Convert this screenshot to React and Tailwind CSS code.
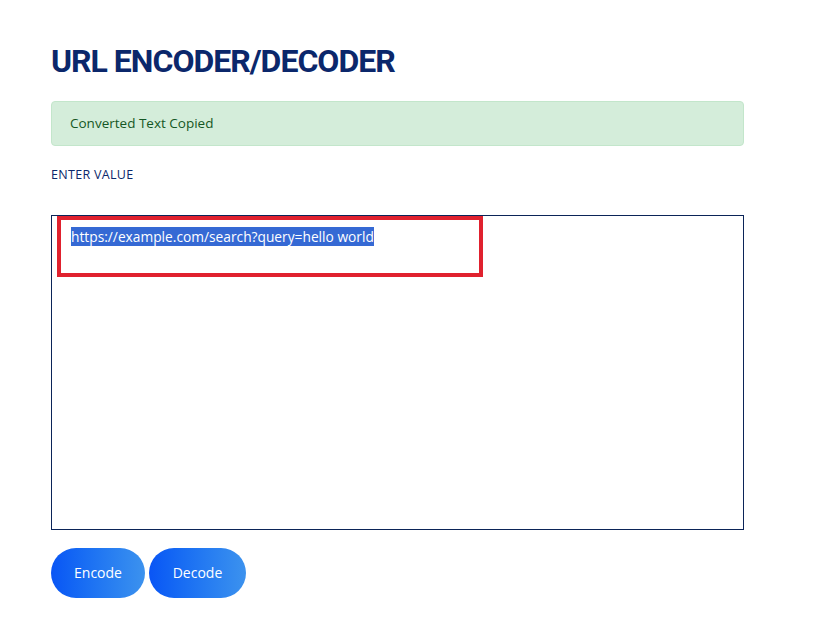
import React from 'react';

const poppins = { fontFamily: '"Open Sans", "Noto Sans", sans-serif' };

const App = () => {
  return (
    <div className="min-h-screen bg-white" style={poppins}>
      <main className="pl-[51px] pr-[78px] pt-[44px]">
        <h1
          className="text-[32px] leading-[34px] font-bold text-[#0b276b] tracking-[-1px]"
          style={{ fontFamily: 'Roboto, "Liberation Sans", sans-serif' }}
        >
          URL ENCODER/DECODER
        </h1>

        {/* Alert */}
        <div className="mt-[23px] h-[45px] flex items-center px-[18px] bg-[#d4edda] border border-[#c3e6cb] rounded-[4px] text-[13.5px] text-[#155724]">
          Converted Text Copied
        </div>

        <label className="block mt-[20px] text-[12.5px] font-medium text-[#0b276b] tracking-[0.3px]">
          ENTER VALUE
        </label>

        {/* Textarea */}
        <div className="relative mt-[30px] h-[315px] border border-[#0b2458] bg-white">
          <div className="pt-[12px] pl-[19px] text-[13.75px] leading-[18px]">
            <span className="bg-[#3569d4] text-white">https://example.com/search?query=hello world</span>
          </div>
          <div className="absolute left-[5px] top-0 w-[426px] h-[61px] border-[4px] border-[#e0212e]" />
        </div>

        {/* Buttons */}
        <div className="flex gap-[4px] mt-[18px]">
          <button className="w-[94px] h-[50px] rounded-full bg-gradient-to-r from-[#0a55f5] to-[#3c92ee] text-white text-[14px] font-medium">
            Encode
          </button>
          <button className="w-[97px] h-[50px] rounded-full bg-gradient-to-r from-[#0a55f5] to-[#3c92ee] text-white text-[14px] font-medium">
            Decode
          </button>
        </div>
      </main>
    </div>
  );
};

export default App;
